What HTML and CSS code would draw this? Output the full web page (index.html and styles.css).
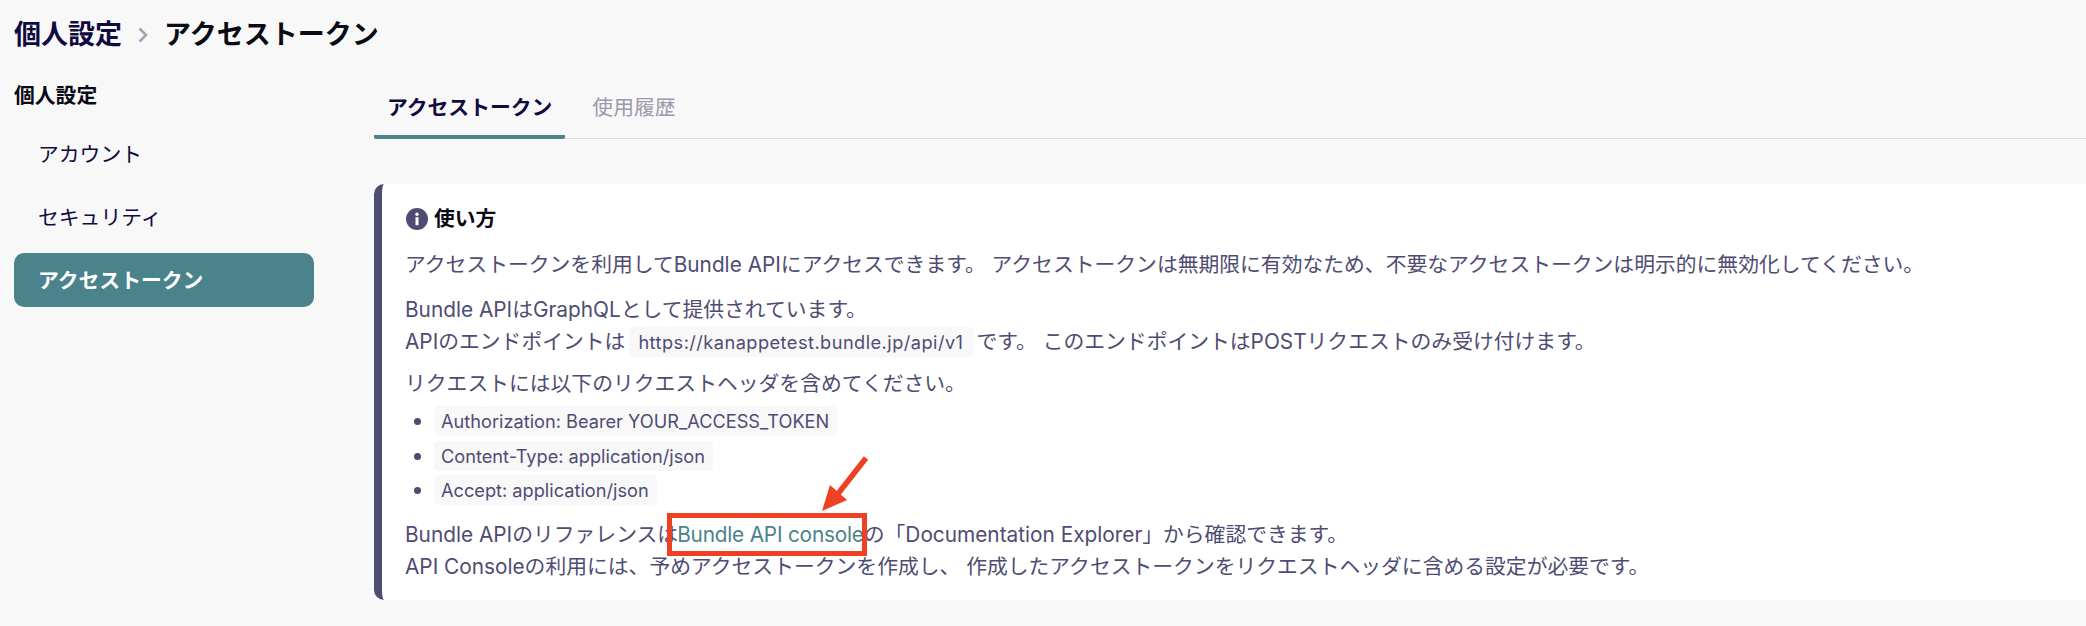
FILE: index.html
```html
<!DOCTYPE html>
<html lang="ja">
<head>
<meta charset="utf-8">
<title>アクセストークン</title>
<link rel="stylesheet" href="styles.css">
</head>
<body>
<header class="crumbs">
  <span class="crumb-parent">個人設定</span>
  <svg class="crumb-sep" width="12" height="16" viewBox="0 0 12 16"><path d="M2.5 1.5 9 8l-6.5 6.5" fill="none" stroke="#a5a3b8" stroke-width="2.6"/></svg>
  <span class="crumb-current">アクセストークン</span>
</header>
<div class="layout">
  <nav class="side">
    <div class="side-title">個人設定</div>
    <a class="side-item">アカウント</a>
    <a class="side-item">セキュリティ</a>
    <a class="side-item active">アクセストークン</a>
  </nav>
  <main class="main">
    <div class="tabs">
      <a class="tab active">アクセストークン</a>
      <a class="tab">使用履歴</a>
    </div>
    <section class="card">
      <h3 class="card-title">
        <svg class="info" width="22" height="22" viewBox="0 0 22 22"><circle cx="11" cy="11" r="11" fill="#4f4c73"/><circle cx="11" cy="6.2" r="1.7" fill="#fff"/><rect x="9.5" y="9.2" width="3" height="8" fill="#fff"/></svg>
        <span class="card-heading">使い方</span>
      </h3>
      <p>アクセストークンを利用してBundle APIにアクセスできます。 アクセストークンは無期限に有効なため、不要なアクセストークンは明示的に無効化してください。</p>
      <p>Bundle APIはGraphQLとして提供されています。<br>APIのエンドポイントは<code class="url">https://kanappetest.bundle.jp/api/v1</code>です。 このエンドポイントはPOSTリクエストのみ受け付けます。</p>
      <p class="tight">リクエストには以下のリクエストヘッダを含めてください。</p>
      <ul>
        <li><code>Authorization: Bearer YOUR_ACCESS_TOKEN</code></li>
        <li><code>Content-Type: application/json</code></li>
        <li><code>Accept: application/json</code></li>
      </ul>
      <p>Bundle APIのリファレンスは<a class="link">Bundle API console</a>の「Documentation Explorer」から確認できます。<br>API Consoleの利用には、予めアクセストークンを作成し、 作成したアクセストークンをリクエストヘッダに含める設定が必要です。</p>
    </section>
  </main>
</div>
<div class="mark-box"></div>
<svg class="mark-arrow" width="60" height="64" viewBox="0 0 60 64"><path d="M51 7 22 44" stroke="#ee4023" stroke-width="5.5" fill="none"/><path d="M7 60 15 34 32 49Z" fill="#ee4023"/></svg>
</body>
</html>
```
FILE: styles.css
```css
* { box-sizing: border-box; }
html, body { margin: 0; height: 100%; overflow: hidden; }
body {
  position: relative;
  background: #f8f8f8;
  color: #4f4c73;
  font-family: Inter, "Noto Sans CJK JP", sans-serif;
  font-size: 20.8px;
  line-height: 32px;
  padding: 17px 0 0 14px;
}
.crumbs { display: flex; align-items: center; height: 36px; font-size: 27px; font-weight: 700; }
.crumb-parent { color: #110a3f; }
.crumb-sep { margin: 0 15px; }
.crumb-current { color: #0a0a14; }
.layout { display: flex; margin-top: 27px; }
.side { width: 300px; flex: none; margin-right: 60px; display: flex; flex-direction: column; gap: 9px; }
.side-title { font-weight: 700; color: #0a0a14; height: 32px; line-height: 32px; margin-bottom: 6px; }
.side-item { height: 54px; line-height: 56px; padding-left: 24px; color: #110a3f; border-radius: 10px; }
.side-item.active { background: #4a838c; color: #fff; font-weight: 700; }
.main { flex: 1; min-width: 0; padding-top: 9px; }
.tabs { display: flex; gap: 14px; border-bottom: 1px solid #dcdcdf; height: 50px; }
.tab { padding: 0 13px; height: 50px; line-height: 38px; color: #9b99ad; }
.tab.active { color: #110a3f; font-weight: 700; border-bottom: 4px solid #4a838c; border-radius: 0 0 2px 2px; }
.card { margin-top: 45px; height: 416px; background: #fff; border-left: 8px solid #4f4c73; border-radius: 10px 0 0 10px; padding: 18px 0 0 23px; }
.card-title { display: flex; align-items: center; gap: 6px; margin: 0 0 13px; font-size: 20.8px; line-height: 32px; font-weight: 700; color: #0a0a14; padding-left: 1px; }
.card-heading { line-height: 34px; }
.info { flex: none; }
p { margin: 0 0 13px; }
p.tight { margin-top: -3px; margin-bottom: 4px; }
code { font-family: inherit; font-size: 18.2px; background: #f8f8f9; border-radius: 5px; padding: 4px 8px 4px 7px; }
code.url { letter-spacing: .46px; padding: 4px 11px 4px 9px; margin: 0 2px 0 4px; }
ul { margin: 0 0 11px; padding: 0 0 0 29px; }
li { height: 34.5px; line-height: 34.5px; }
li::marker { font-size: 20.8px; }
.link { color: #4a838c; letter-spacing: -.2px; margin-left: -1px; }
.mark-box { position: absolute; left: 667px; top: 513px; width: 200px; height: 43px; border: 5px solid #ee4023; }
.mark-arrow { position: absolute; left: 815px; top: 451px; }
```
